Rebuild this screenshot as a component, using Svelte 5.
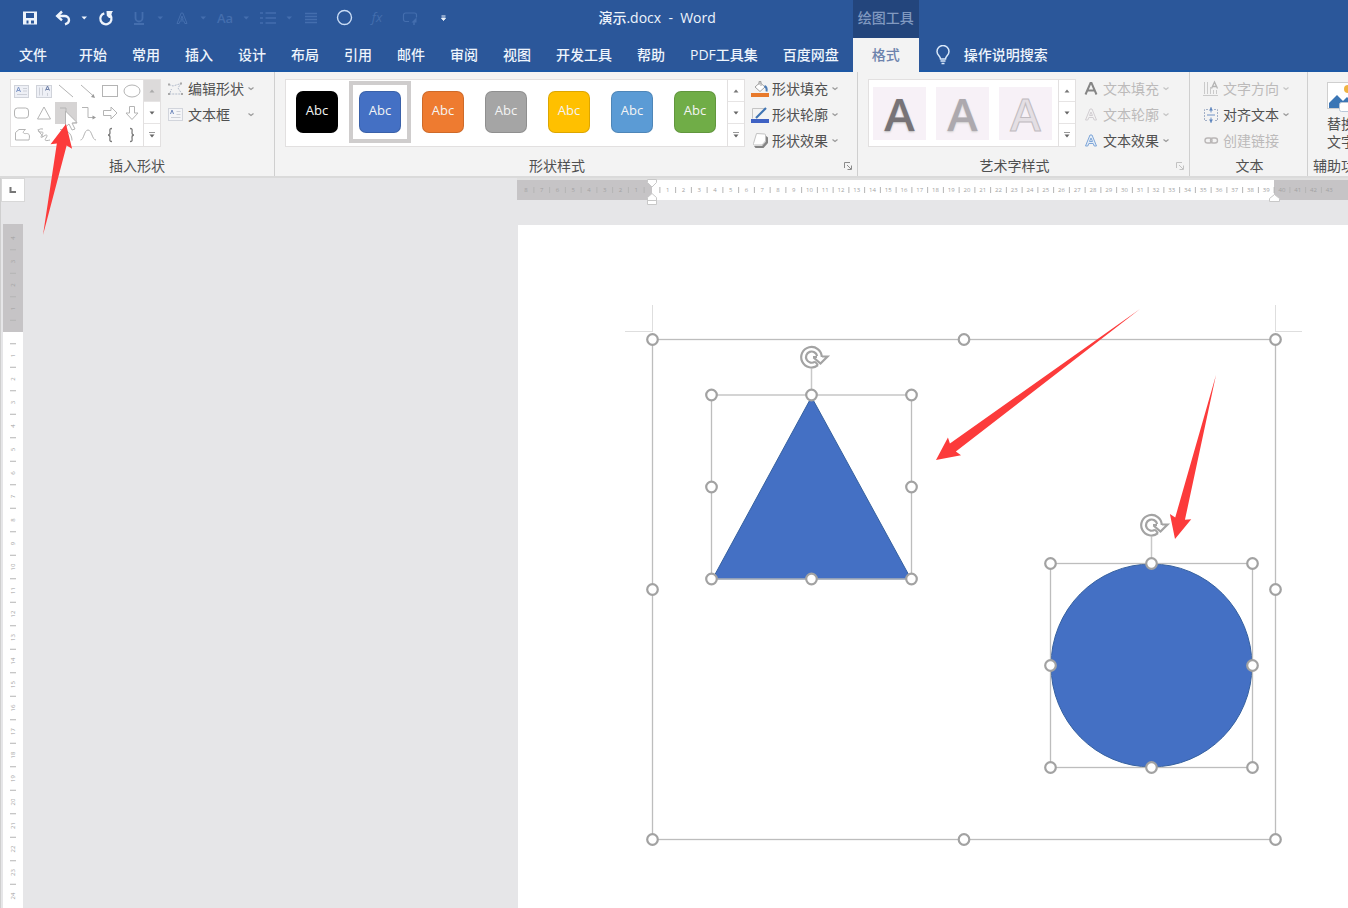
<script>
  const tabs = ['开始', '常用', '插入', '设计', '布局', '引用', '邮件', '审阅', '视图', '开发工具', '帮助', 'PDF工具集', '百度网盘'];

  const quick = [
    { id: 'save', label: '保存' },
    { id: 'undo', label: '撤消' },
    { id: 'caret', label: '撤消选项' },
    { id: 'redo', label: '恢复' },
    { id: 'underline', label: '下划线', dim: true },
    { id: 'caret', label: '下划线选项', dim: true },
    { id: 'effect', label: '文本效果', dim: true },
    { id: 'caret', label: '文本效果选项', dim: true },
    { id: 'case', label: '更改大小写', dim: true },
    { id: 'caret', label: '大小写选项', dim: true },
    { id: 'list', label: '项目符号', dim: true },
    { id: 'caret', label: '项目符号选项', dim: true },
    { id: 'lines', label: '对齐', dim: true },
    { id: 'circle', label: '椭圆' },
    { id: 'fx', label: '公式', dim: true },
    { id: 'select', label: '选择对象', dim: true },
    { id: 'more', label: '自定义快速访问工具栏' }
  ];

  const shapes = ['textbox', 'vtextbox', 'line', 'arrowline', 'rect', 'oval', 'round', 'triangle', 'elbow', 'elbowarrow', 'right', 'down', 'freeform', 'scribble', 'arc', 'curve', 'lbrace', 'rbrace'];

  const swatches = ['#000000', '#4470c4', '#ee7b30', '#a5a5a5', '#ffc000', '#5b9bd5', '#70ad47'];

  const shapeTools = [
    { icon: 'fill', text: '形状填充' },
    { icon: 'outline', text: '形状轮廓' },
    { icon: 'shadow', text: '形状效果' }
  ];
  const textTools = [
    { icon: 'afill', text: '文本填充', off: true },
    { icon: 'aoutline', text: '文本轮廓', off: true },
    { icon: 'aeffect', text: '文本效果' }
  ];
  const layoutTools = [
    { icon: 'direction', text: '文字方向', off: true },
    { icon: 'align', text: '对齐文本' },
    { icon: 'link', text: '创建链接', off: true, plain: true }
  ];

  const UNIT_X = 15.75;
  const ORIGIN_X = 135;
  const UNIT_Y = 23.5;
  const ORIGIN_Y = 108;

  // Ruler marks are produced only as far as the visible length reaches.
  let stageWidth = $state(0);
  let asideHeight = $state(0);
  const marks = (lead, length, origin, unit) => {
    const count = Math.max(0, Math.floor((length - origin - 5) / unit));
    return [
      ...Array.from({ length: lead }, (_, i) => -(i + 1)),
      ...Array.from({ length: count }, (_, i) => i + 1)
    ];
  };
  const hMarks = $derived(marks(8, stageWidth, ORIGIN_X, UNIT_X));
  const vMarks = $derived(marks(4, asideHeight - 46, ORIGIN_Y, UNIT_Y));

  const selections = [
    { x1: 652.5, y1: 339.5, x2: 1275.5, y2: 839.5 },
    { x1: 711.5, y1: 395, x2: 911.5, y2: 579, spin: 357 },
    { x1: 1050.5, y1: 563.5, x2: 1252.5, y2: 767.5, spin: 525 }
  ];

  function handles(s) {
    const mx = (s.x1 + s.x2) / 2;
    const my = (s.y1 + s.y2) / 2;
    return [[s.x1, s.y1], [mx, s.y1], [s.x2, s.y1], [s.x1, my], [s.x2, my], [s.x1, s.y2], [mx, s.y2], [s.x2, s.y2]];
  }

  // Tapered pointer: starts as a point at the tail and widens towards the head.
  function pointer(tx, ty, hx, hy) {
    const len = Math.hypot(hx - tx, hy - ty);
    const ux = (hx - tx) / len;
    const uy = (hy - ty) / len;
    const at = (back, side) => `${hx - ux * back - uy * side},${hy - uy * back + ux * side}`;
    return [at(0, 0), at(23, 11), at(21, 5), `${tx},${ty}`, at(21, -5), at(23, -11)].join(' ');
  }
</script>

{#snippet quickIcon(id)}
  <svg class="q" width={id === 'caret' ? 8 : 16} height="16" viewBox={id === 'caret' ? '0 0 8 16' : '0 0 16 16'} aria-hidden="true">
    {#if id === 'save'}
      <path fill="currentColor" fill-rule="evenodd" d="M1 1.500h14v13H1zM4 3v5h8V3zM4.500 10.500v3h2v-3h2.500v3h3v-3z" />
    {:else if id === 'undo'}
      <path d="M2.500 6h7c2.500 0 4.500 1.600 4.500 4 0 2.300-1.600 3.600-4 4.300" fill="none" stroke="currentColor" stroke-width="2.400" />
      <path d="M7 1.500 2.200 6 7 10.300" fill="none" stroke="currentColor" stroke-width="2.400" />
    {:else if id === 'redo'}
      <path d="M6.300 3.300A5.600 5.600 0 1 0 12.500 5.500" fill="none" stroke="currentColor" stroke-width="2.300" />
      <path d="M8.500 1h6.500L14 2.500 12.500 8H11L8.800 5.800z" fill="currentColor" />
    {:else if id === 'caret'}
      <path d="M1.500 6.500h5.500L4.200 9.500z" fill="currentColor" />
    {:else if id === 'underline'}
      <path d="M4.500 2v6a3.500 3.500 0 0 0 7 0V2M3 14h10" fill="none" stroke="currentColor" stroke-width="1.800" />
    {:else if id === 'effect'}
      <path d="M3 13.500 7.200 3h1.600L13 13.500h-2.200l-1-2.600H6.200l-1 2.600zM8 6 6.800 9.300h2.400z" fill="none" stroke="currentColor" />
    {:else if id === 'case'}
      <text x="8" y="13" text-anchor="middle" font-size="13" font-weight="600" fill="currentColor">Aa</text>
    {:else if id === 'list'}
      <path d="M0 3h3M0 8h3M0 13h3M5.500 3H16M5.500 8H16M5.500 13H16" stroke="currentColor" stroke-width="1.500" />
    {:else if id === 'lines'}
      <path d="M2 3.500h12M2 6.500h12M2 9.500h12M2 12.500h12" stroke="currentColor" stroke-width="1.300" />
    {:else if id === 'circle'}
      <circle cx="8.500" cy="7.500" r="7" fill="none" stroke="#c9dcf5" stroke-width="1.400" />
    {:else if id === 'fx'}
      <text x="8" y="12" text-anchor="middle" font-size="13" font-style="italic" fill="currentColor">fx</text>
    {:else if id === 'select'}
      <path d="M7 11.500H3.500a2 2 0 0 1-2-2V5a2 2 0 0 1 2-2h9a2 2 0 0 1 2 2v2.500" fill="none" stroke="currentColor" stroke-width="1.200" />
      <path d="m14.500 7.500-5 5h5z" fill="currentColor" /><path d="M12 12v3" stroke="currentColor" stroke-width="1.500" />
    {:else}
      <path d="M6.500 6h4M6.500 8h4L8.500 10.500z" fill="currentColor" stroke="currentColor" stroke-width="1" />
    {/if}
  </svg>
{/snippet}

{#snippet shapeIcon(id)}
  <svg width="18" height="16" viewBox="0 0 18 16" fill="none" stroke="#b4b4b4" aria-hidden="true">
    {#if id === 'textbox'}
      <rect x="1.500" y="2.500" width="14" height="12" fill="#eef0f6" stroke="#d0d3da" />
      <path d="m3.500 9 2-5 2 5M4.200 7.500h2.600" stroke="#7e96c6" /><path d="M10 5.500h4M10 8h4M4 11.500h10" stroke="#cdd0d8" />
    {:else if id === 'vtextbox'}
      <rect x="1.500" y="2.500" width="15" height="12" fill="#eef0f6" stroke="#d0d3da" />
      <path d="m10.500 7.500 2-4.500 2 4.500M11.200 6.500h2.600" stroke="#6b7da5" /><path d="M4.500 4.500v8M7.500 4.500v8M12.500 10v3" stroke="#cdd0d8" />
    {:else if id === 'line'}
      <path d="m2 2 14 12" />
    {:else if id === 'arrowline'}
      <path d="m2 2 13 11.500" /><path d="m16 15-4-1 2.500-3z" fill="#999" stroke="none" />
    {:else if id === 'rect'}
      <rect x="1.500" y="2.500" width="15" height="11" />
    {:else if id === 'oval'}
      <ellipse cx="9" cy="8" rx="8" ry="6" />
    {:else if id === 'round'}
      <rect x="1.500" y="3" width="14" height="10" rx="3" />
    {:else if id === 'triangle'}
      <path d="m9 2 6.500 12h-13z" />
    {:else if id === 'elbow'}
      <path d="M3 3h6v10h6" />
    {:else if id === 'elbowarrow'}
      <path d="M3 2.500h6v10h5" /><path d="m17 12.500-3.500-2v4z" fill="#999" stroke="none" />
    {:else if id === 'right'}
      <path d="M2.500 5.500H10V2l6 6-6 6v-3.500H2.500z" />
    {:else if id === 'down'}
      <path d="M6.500 1.500V8H3l6 6.500L15 8h-3.500V1.500z" />
    {:else if id === 'freeform'}
      <path d="M2.500 5.500 6 2.500h6.500c-4 3-2 4.500 1 4 3 0 3.500 2 2.500 6.500H2.500z" />
    {:else if id === 'scribble'}
      <path d="M8 2C3 1 2 5 5 5s4 0 2 3-1 3 2 1 4-1 2 2 0 3 4 2M3 2c1 4 3 4 5 8" />
    {:else if id === 'arc'}
      <path d="M3 2.500c7 0 12 4 12 11" />
    {:else if id === 'curve'}
      <path d="M1.500 13C5 13 5 3 9 3s4 10 8 10" />
    {:else if id === 'lbrace'}
      <path d="M11 1.500c-3 0-2 2-2 4C9 7 8.500 8 7 8c1.500 0 2 1 2 2.500 0 2-1 4 2 4" stroke="#7d7d7d" stroke-width="1.300" />
    {:else}
      <path d="M7 1.500c3 0 2 2 2 4C9 7 9.500 8 11 8c-1.500 0-2 1-2 2.500 0 2 1 4-2 4" stroke="#7d7d7d" stroke-width="1.300" />
    {/if}
  </svg>
{/snippet}

{#snippet toolIcon(id)}
  <svg width="18" height="18" viewBox="0 0 18 18" fill="none" aria-hidden="true">
    {#if id === 'edit'}
      <path d="M2 4.500 6 6l8-2.500-3 4.500 4 6H2.500l2-5" stroke="#b3bccb" stroke-dasharray="2 1" />
      <path d="M1 3.500h2v2H1zM13 2.500h2v2h-2zM1 13h2v2H1zM14 13h2v2h-2z" fill="#a9a9a9" />
    {:else if id === 'box'}
      <rect x="1.500" y="2.500" width="14" height="12" fill="#f4f5f8" stroke="#d2d5dc" />
      <path d="m3.500 8 1.500-4 1.500 4" stroke="#7089bd" /><path d="M9.500 5.500h4M9.500 8.500h4M4 11.500h9.500" stroke="#cdd0d8" />
    {:else if id === 'fill'}
      <path d="m4 7 5-4.500 5 4.500-5 4.500zM8 5V1.500h2V6" fill="#fff" stroke="#a3a3a3" />
      <path d="M13.500 6c2 1 2.500 3 2 5.500" stroke="#4d7cb5" stroke-width="2" /><path d="M0 13h18v4H0z" fill="#e87a2c" />
    {:else if id === 'outline'}
      <path d="M1.500 12.500v-10h13" stroke="#c4c4c4" /><path d="M5 12 15 2" stroke="#3f74b3" stroke-width="2.200" />
      <path d="M0 13h18v4H0z" fill="#3f62c4" />
    {:else if id === 'shadow'}
      <path d="M3 14h8l3.500-4V3.500L17 5.500V11l-4.500 5H4.500z" fill="#858585" />
      <path d="m5.500 1.500 8 .5q1 0 1 1v6L11 13H3.500q-1.500 0-1-1.500z" fill="#fff" stroke="#c2c2c2" />
    {:else if id === 'afill'}
      <path d="M3.500 14.500 8.500 3h1l5 11.500M5.500 10.500h7" stroke="#858585" stroke-width="2" />
    {:else if id === 'aoutline'}
      <path d="m3.500 14 4.500-11h2L14.500 14h-2.300l-1-2.500H6.800L5.800 14zM9 6 7.500 9.500h3z" stroke="#d2ced2" />
    {:else if id === 'aeffect'}
      <path d="m3.500 14 4.500-11h2L14.500 14h-2.300l-1-2.500H6.800L5.800 14zM9 6 7.500 9.500h3z" stroke="#7fa6d8" fill="#e3edf8" />
    {:else if id === 'direction'}
      <path d="M2.500 2v12M5.500 2v12M8.500 7v7M11.500 10v4M14.500 10v4M1 15.500h15" stroke="#cacaca" /><path d="m9.500 8.500 3-6.500 3 6.500M10.500 6.500h4" stroke="#b3b3b3" stroke-width="1.300" />
    {:else if id === 'align'}
      <path d="M6 3.500H2.500v11H6M12 3.500h3.500v11H12" stroke="#a3b0c7" stroke-dasharray="2 1" /><path d="M9 1v5.500M9 11.500V17M5 9h8" stroke="#6f92c6" />
      <path d="m9 1.500 2 3H7zM9 16.500l2-3H7z" fill="#5b83bd" />
    {:else if id === 'link'}
      <rect x="3" y="6" width="7" height="5" rx="2.500" stroke="#bab7b7" stroke-width="1.400" /><rect x="8.500" y="6" width="7" height="5" rx="2.500" stroke="#bab7b7" stroke-width="1.400" />
    {/if}
  </svg>
{/snippet}

{#snippet tool(t)}
  <button class="tool" class:off={t.off}>
    {@render toolIcon(t.icon)}
    <span>{t.text}</span>
    {#if !t.plain}
      <svg class="chev" width="8" height="6" viewBox="0 0 8 6" aria-hidden="true"><path d="m1.500 1.500 2.500 2 2.500-2" fill="none" stroke="currentColor" stroke-width="1.200" /></svg>
    {/if}
  </button>
{/snippet}

{#snippet scroller(dimUp)}
  <div class="scroller">
    <button class:dim={dimUp} aria-label="上一行"><svg width="8" height="6" viewBox="0 0 8 6"><path d="M1.500 4.500h5L4 1.500z" fill={dimUp ? '#aaa' : '#777'} /></svg></button>
    <button aria-label="下一行"><svg width="8" height="6" viewBox="0 0 8 6"><path d="M1.500 1.500h5L4 4.500z" fill="#666" /></svg></button>
    <button aria-label="其他"><svg width="8" height="8" viewBox="0 0 8 8"><path d="M1 1.500h6" stroke="#999" /><path d="M1.500 3.500h5L4 6.500z" fill="#666" /></svg></button>
  </div>
{/snippet}

{#snippet launcher(name, dim)}
  <button class="launcher" class:dim aria-label={name}>
    <svg width="10" height="10" viewBox="0 0 10 10" fill="none" stroke="currentColor"><path d="M1.500 7V1.500H7M4 4l4 4M8.500 4.500v4h-4" /></svg>
  </button>
{/snippet}

<div class="window">
  <header>
    <div class="titlebar">
      <div class="quick">
        {#each quick as q}
          <button class:caret={q.id === 'caret'} class:dim={q.dim} aria-label={q.label}>{@render quickIcon(q.id)}</button>
        {/each}
      </div>
      <h1>演示.docx&nbsp; -&nbsp; Word</h1>
    </div>
    <div class="context">绘图工具</div>
    <nav class="tabs">
      <button class="file">文件</button>
      {#each tabs as t}<button>{t}</button>{/each}
    </nav>
    <button class="active">格式</button>
    <button class="tellme">
      <svg width="16" height="20" viewBox="0 0 16 20" fill="none" stroke="#d9e8fa" stroke-width="1.500" aria-hidden="true">
        <path d="M5.500 14c0-3-3.500-3.500-3.500-7.500a6 6 0 0 1 12 0c0 4-3.500 4.500-3.500 7.500zM5.500 16h5M6.500 18.500h3" />
      </svg>
      <span>操作说明搜索</span>
    </button>
  </header>

  <div class="ribbon">
    <section class="group insert">
      <div class="body">
        <div class="gallery">
          <div class="shapes">
            {#each shapes as s}
              <button class:hot={s === 'elbow'} aria-label={s}>{@render shapeIcon(s)}</button>
            {/each}
          </div>
          {@render scroller(true)}
        </div>
        <div class="tools">
          {@render tool({ icon: 'edit', text: '编辑形状' })}
          {@render tool({ icon: 'box', text: '文本框' })}
        </div>
      </div>
      <footer><span>插入形状</span></footer>
    </section>

    <section class="group styles">
      <div class="body">
        <div class="gallery">
          <div class="swatches">
            {#each swatches as c, i}
              <button class:picked={i === 1}><span style:background={c}>Abc</span></button>
            {/each}
          </div>
          {@render scroller(false)}
        </div>
        <div class="tools">{#each shapeTools as t}{@render tool(t)}{/each}</div>
      </div>
      <footer><span>形状样式</span>{@render launcher('设置形状格式', false)}</footer>
    </section>

    <section class="group art">
      <div class="body">
        <div class="gallery">
          <div class="letters">
            <button class="solid">A</button>
            <button class="soft">A</button>
            <button class="hollow">A</button>
          </div>
          {@render scroller(false)}
        </div>
        <div class="tools">{#each textTools as t}{@render tool(t)}{/each}</div>
      </div>
      <footer><span>艺术字样式</span>{@render launcher('设置文本效果格式', true)}</footer>
    </section>

    <section class="group text">
      <div class="body">
        <div class="tools">{#each layoutTools as t}{@render tool(t)}{/each}</div>
      </div>
      <footer><span>文本</span></footer>
    </section>

    <section class="group access">
      <div class="body">
        <button class="alt">
          <svg width="36" height="32" viewBox="0 0 36 32" aria-hidden="true">
            <rect x=".5" y="1.500" width="34" height="26" fill="#fff" stroke="#cfcfcf" />
            <circle cx="21" cy="8" r="4" fill="#f0b341" />
            <path d="M2 27v-5l8-8 6 6 4-4 12 11z" fill="#3b76b5" />
            <rect x="12.500" y="21.500" width="23" height="9" rx="2" fill="#fff" stroke="#b9c7d8" />
          </svg>
          <span>替换</span>
          <span>文字</span>
        </button>
      </div>
      <footer><span>辅助功能</span></footer>
    </section>
  </div>

  <main>
    <aside bind:clientHeight={asideHeight}>
      <button class="corner" aria-label="制表符">
        <svg width="8" height="8" viewBox="0 0 8 8"><path d="M1.500 1v5H7" fill="none" stroke="#777" stroke-width="2" /></svg>
      </button>
      <svg class="vruler" aria-hidden="true">
        <rect width="20" height={ORIGIN_Y} fill="#c6c4c6" />
        {#each vMarks as m}
          {@const y = ORIGIN_Y + m * UNIT_Y}
          <text x="10" y={y} transform="rotate(-90 10 {y})" dy="2" text-anchor="middle">{Math.abs(m)}</text>
          <path d="M7 {y - Math.sign(m) * UNIT_Y / 2}h6" />
        {/each}
      </svg>
    </aside>

    <div class="stage" bind:clientWidth={stageWidth}>
      <svg class="hruler" aria-hidden="true">
        <rect y="2" width={ORIGIN_X} height="20" fill="#c6c4c6" />
        <rect x="757" y="2" width="100%" height="20" fill="#c6c4c6" />
        {#each hMarks as m}
          {@const x = ORIGIN_X + m * UNIT_X}
          <text x={x} y="14" text-anchor="middle">{Math.abs(m)}</text>
          <path d="M{x - Math.sign(m) * UNIT_X / 2} 9v6" />
        {/each}
        <g class="stop">
          <path d="M130.500 1.500h9v3l-4.500 4.500-4.500-4.500z" />
          <path d="M130.500 19.500l4.500-4 4.500 4v7h-9zM130.500 22.500h9" />
          <path d="M752.500 23.500v-3l5-4 5 4v3z" />
        </g>
      </svg>

      <div class="page">
        <svg class="drawing" role="img" aria-label="绘图画布">
          <g transform="translate(-518 -225)">
            <path d="M652.500 305v27M625 331.500h27M1275.500 305v27M1276 331.500h26" stroke="#dedede" fill="none" />
            <path d="M811.500 397 911 579H712.500z" fill="#4470c4" stroke="#35609f" />
            <ellipse cx="1151.500" cy="665.500" rx="100.500" ry="101.500" fill="#4470c4" stroke="#35609f" />
            {#each selections as s}
              {@const mid = (s.x1 + s.x2) / 2}
              <rect x={s.x1} y={s.y1} width={s.x2 - s.x1} height={s.y2 - s.y1} fill="none" stroke="#bdbdbd" stroke-width="1.300" />
              {#if s.spin}
                <path d="M{mid} {s.spin + 12}V{s.y1}" stroke="#c8c8c8" stroke-width="1.500" />
                <g transform="translate({mid} {s.spin})" fill="none">
                  <path d="M6.500 8.200A10.300 10.300 0 1 1 10.300 0" stroke="#a3a3a3" stroke-width="2.200" />
                  <path d="M3.500 4.600A5.600 5.600 0 1 1 5.600 -1" stroke="#a3a3a3" stroke-width="2.200" />
                  <path d="M1.500 0h4M10.500-.5h5.500L9 6.500 2 .5" stroke="#a3a3a3" stroke-width="2.200" />
                  <path d="M6.500 8.200 3.500 4.600" stroke="#a3a3a3" stroke-width="2" />
                </g>
              {/if}
              {#each handles(s) as h}
                <circle cx={h[0]} cy={h[1]} r="5.300" fill="#fff" stroke="#a2a2a2" stroke-width="2.200" />
              {/each}
            {/each}
            <polygon points={pointer(1140, 309, 936, 460)} fill="#fc3b3b" />
            <polygon points={pointer(1216, 375, 1175, 539)} fill="#fc3b3b" />
          </g>
        </svg>
      </div>
    </div>
  </main>

  <svg class="overlay" width="90" height="240" aria-hidden="true">
    <path d="M65.500 111v16l3.500-3 3 6 3-1-3-6 5-.5z" fill="#fff" stroke="#b5b5b5" />
    <polygon points={pointer(43, 235, 66, 124)} fill="#fc3b3b" />
  </svg>
</div>

<style>
  :global(body) {
    margin: 0;
    background: #e6e6e8;
  }
  .window {
    position: relative;
    display: flex;
    flex-direction: column;
    min-height: 100vh;
    overflow: hidden;
    font: 14px/20px "Open Sans", "Noto Sans CJK SC", sans-serif;
    color: #505050;
  }
  button {
    margin: 0;
    padding: 0;
    border: 0;
    background: none;
    font: inherit;
    color: inherit;
    white-space: nowrap;
  }
  svg {
    display: block;
    flex: none;
  }

  header {
    display: grid;
    grid-template-columns: auto 66px 1fr;
    grid-template-rows: 38px 34px;
    background: #2b579a;
    color: #eef4fc;
    box-shadow: inset 0 -2px #1c58a5;
    font-weight: 500;
  }
  .titlebar {
    display: flex;
    align-items: center;
    justify-content: space-between;
    padding: 0 137px 2px 22px;
  }
  .quick {
    display: flex;
    align-items: center;
    gap: 17px;
  }
  .quick svg {
    overflow: visible;
  }
  .quick .caret {
    margin: 0 -7px 0 -8px;
  }
  .quick .dim {
    color: #446eae;
  }
  h1 {
    margin: 0;
    font-size: 14px;
    font-weight: 500;
    white-space: nowrap;
  }
  .context {
    display: grid;
    place-items: center;
    padding-bottom: 2px;
    background: #23457c;
    color: #8199c0;
    white-space: nowrap;
  }
  .tabs {
    grid-column: 1;
    display: flex;
    gap: 25px;
    padding: 0 14px 0 19px;
  }
  .tabs .file {
    margin-right: 7px;
  }
  .active {
    background: #f3f3f3;
    color: #6d83ad;
  }
  .tellme {
    display: flex;
    align-items: center;
    gap: 13px;
    padding-left: 16px;
  }

  .ribbon {
    display: flex;
    background: #f3f3f3;
    border-bottom: 2px solid #dadada;
  }
  .group {
    flex: none;
    display: flex;
    flex-direction: column;
    justify-content: space-between;
    box-sizing: border-box;
    height: 104px;
    padding: 7px 0 0 10px;
    border-right: 1px solid #cfcfcf;
  }
  .insert { width: 275px; }
  .styles { width: 583px; }
  .art { width: 332px; }
  .text { width: 118px; padding-left: 12px; }
  .access {
    flex: 1;
    min-width: 0;
    overflow: hidden;
    border: 0;
    padding-left: 19px;
  }
  .body {
    display: flex;
    gap: 6px;
  }
  .group footer {
    display: flex;
    align-items: center;
    height: 20px;
    margin-left: -10px;
  }
  .group footer span {
    flex: 1;
    text-align: center;
  }
  .access footer {
    margin-left: -14px;
  }
  .access footer span {
    flex: none;
    white-space: nowrap;
  }
  .launcher {
    display: grid;
    place-items: center;
    width: 18px;
    height: 20px;
    color: #8a8a8a;
  }
  .launcher.dim {
    color: #c2c2c2;
  }
  .gallery {
    display: flex;
    box-sizing: border-box;
    height: 68px;
    background: #fff;
    border: 1px solid #e2e0e0;
  }
  .shapes {
    display: grid;
    grid-template-columns: repeat(6, 22px);
    grid-auto-rows: 22px;
  }
  .shapes button {
    display: grid;
    place-items: center;
  }
  .shapes .hot {
    background: #d6d4d4;
  }
  .scroller {
    display: grid;
    grid-template-rows: repeat(3, 22px);
    width: 16px;
    border-left: 1px solid #e2e0e0;
  }
  .scroller button {
    display: grid;
    place-items: center;
    border-bottom: 1px solid #e6e4e4;
  }
  .scroller button:last-child {
    border: 0;
  }
  .scroller .dim {
    background: #dcdada;
  }
  .swatches {
    display: flex;
    gap: 1px;
    padding: 1px 1px 1px 0;
  }
  .swatches button {
    display: grid;
    place-items: center;
    box-sizing: border-box;
    width: 62px;
    height: 62px;
  }
  .swatches .picked {
    border: 4px solid #cfcdcd;
  }
  .swatches span {
    box-sizing: border-box;
    width: 42px;
    height: 42px;
    border: 1px solid #00000022;
    border-radius: 7px;
    color: #f4f4f4;
    font-size: 13px;
    line-height: 37px;
  }
  .letters {
    display: flex;
    align-items: center;
    gap: 10px;
    padding: 0 6px 0 4px;
  }
  .letters button {
    width: 53px;
    height: 53px;
    background: #f7f1f7;
    font: 600 46px/52px "Open Sans", sans-serif;
  }
  .letters .solid {
    color: #777377;
    text-shadow: 0 1px 2px #bbb;
  }
  .letters .soft {
    color: #ada9ae;
    text-shadow: 0 1px 2px #ccc;
  }
  .letters .hollow {
    color: #e4dfe4;
    -webkit-text-stroke: 1px #c0bbc0;
  }
  .tools {
    display: flex;
    flex-direction: column;
    gap: 6px;
  }
  .tool {
    display: flex;
    align-items: center;
    gap: 3px;
    height: 20px;
  }
  .tool span {
    min-width: 56px;
    text-align: left;
  }
  .tool.off {
    color: #bcbaba;
  }
  .chev {
    color: #999;
  }
  .off .chev {
    color: #c4c4c4;
  }
  .alt {
    display: flex;
    flex-direction: column;
    line-height: 18px;
    text-align: left;
  }
  .alt svg {
    margin: 2px 0;
  }

  main {
    flex: 1;
    display: flex;
  }
  aside {
    display: flex;
    flex-direction: column;
    flex: none;
    width: 24px;
    border-left: 1px solid #cfcfcf;
    box-sizing: border-box;
  }
  .corner {
    display: grid;
    place-items: center;
    width: 24px;
    height: 24px;
    background: #fff;
    border: 1px solid #d8d8d8;
  }
  .vruler {
    flex: 1 1 0;
    width: 20px;
    margin: 22px 0 0 2px;
    background: #fff;
  }
  .vruler text,
  .hruler text {
    font: 6px "Open Sans", sans-serif;
    fill: #a2a2a2;
  }
  .vruler path,
  .hruler path {
    stroke: #b4b4b4;
    fill: none;
  }
  .stage {
    flex: 1;
    display: flex;
    flex-direction: column;
    min-width: 0;
    margin-left: 493px;
  }
  .hruler {
    width: 100%;
    height: 27px;
    background: linear-gradient(#e0e0e0 2px, #fff 2px, #fff 22px, #e6e6e8 22px);
  }
  .hruler .stop path {
    fill: #fff;
    stroke: #c8c8c8;
  }
  .page {
    flex: 1;
    display: flex;
    margin: 20px 0 0 1px;
    background: #fff;
  }
  .drawing {
    flex: 1;
    min-width: 0;
    height: auto;
    min-height: 680px;
  }
  .overlay {
    position: absolute;
    top: 0;
    left: 0;
    pointer-events: none;
  }
</style>
